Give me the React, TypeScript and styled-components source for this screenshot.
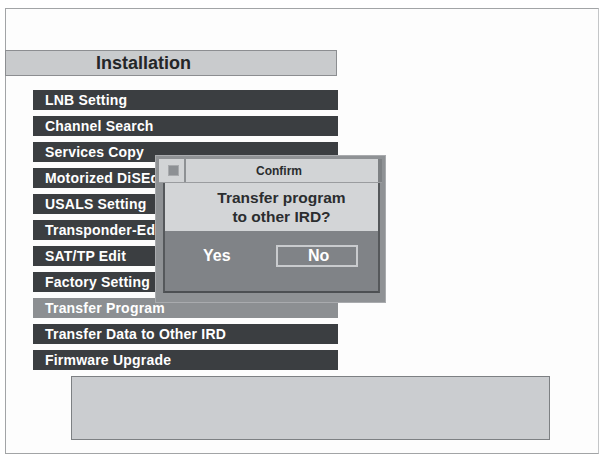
import React from "react";
import styled, { createGlobalStyle } from "styled-components";

const Global = createGlobalStyle`
  html, body { margin: 0; padding: 0; background: #ffffff; }
  body { font-family: "Liberation Sans", Arial, sans-serif; }
`;

const Frame = styled.div`
  position: relative;
  box-sizing: border-box;
  margin: 8px 0 0 5px;
  width: 594px;
  height: 446px;
  border: 1px solid #a2a4a6;
  border-right-color: #c4c6c8;
  background: #fdfdfd;
  padding-top: 41px;
`;

const Header = styled.div`
  box-sizing: border-box;
  width: 332px;
  height: 26px;
  margin-left: -1px;
  background: #c9cbcd;
  border: 1px solid #8c8e91;
  display: flex;
  align-items: center;
  font-weight: bold;
  font-size: 18px;
  color: #242628;
  padding-left: 90px;
`;

const Menu = styled.div`
  display: flex;
  flex-direction: column;
  gap: 6px;
  margin: 14px 0 0 27px;
  width: 305px;
`;

const Item = styled.div<{ $active?: boolean }>`
  height: 20px;
  box-sizing: border-box;
  background: ${(p) => (p.$active ? "#8c8f92" : "#3b3e41")};
  color: #ffffff;
  font-weight: bold;
  font-size: 14px;
  letter-spacing: 0.2px;
  display: flex;
  align-items: center;
  padding-left: 12px;
  white-space: nowrap;
  overflow: hidden;
`;

const InfoBox = styled.div`
  box-sizing: border-box;
  width: 479px;
  height: 64px;
  margin: 6px 0 0 65px;
  background: #cbcdd0;
  border: 1px solid #7d8083;
`;

const Dialog = styled.div`
  position: absolute;
  left: 149px;
  top: 146px;
  width: 231px;
  height: 148px;
  box-sizing: border-box;
  background: #8f9295;
  border: 1px solid #a9abae;
  padding: 3px 3px 0 3px;
  display: flex;
  flex-direction: column;
`;

const TitleBar = styled.div`
  height: 24px;
  box-sizing: border-box;
  display: flex;
  background: #d2d4d6;
  border-bottom: 1px solid #9a9c9f;
`;

const TitleIcon = styled.div`
  width: 21px;
  display: flex;
  align-items: center;
  justify-content: center;
  border-right: 2px solid #8e9194;
  margin-left: 4px;
  &::before {
    content: "";
    width: 9px;
    height: 9px;
    background: #8d9094;
    border: 1px solid #a8aaad;
  }
`;

const TitleText = styled.div`
  flex: 1;
  display: flex;
  align-items: center;
  justify-content: center;
  font-weight: bold;
  font-size: 12px;
  color: #2a2c2e;
  padding-right: 6px;
`;

const TitleEnd = styled.div`
  width: 4px;
  background: #7e8184;
`;

const Body = styled.div`
  margin: 0 2px 0 4px;
  border-left: 2px solid #55585b;
  border-right: 2px solid #55585b;
  border-bottom: 2px solid #4d5053;
  display: flex;
  flex-direction: column;
`;

const Question = styled.div`
  height: 48px;
  background: #d3d5d7;
  display: flex;
  flex-direction: column;
  align-items: center;
  justify-content: center;
  font-weight: bold;
  font-size: 15.5px;
  line-height: 19px;
  color: #2b2d2f;
  padding-left: 20px;
`;

const Buttons = styled.div`
  height: 60px;
  background: #808387;
  display: flex;
  align-items: flex-start;
  padding: 14px 0 0 38px;
  box-sizing: border-box;
  gap: 45px;
`;

const Btn = styled.div<{ $boxed?: boolean }>`
  box-sizing: border-box;
  height: 22px;
  width: ${(p) => (p.$boxed ? "82px" : "auto")};
  border: ${(p) => (p.$boxed ? "2px solid #c9cbce" : "none")};
  display: flex;
  align-items: center;
  justify-content: center;
  color: #ffffff;
  font-weight: bold;
  font-size: 16px;
  padding-left: ${(p) => (p.$boxed ? "4px" : "0")};
`;

const items = [
  "LNB Setting",
  "Channel Search",
  "Services Copy",
  "Motorized DiSEqC",
  "USALS Setting",
  "Transponder-Edit",
  "SAT/TP Edit",
  "Factory Setting",
  "Transfer Program",
  "Transfer Data to Other IRD",
  "Firmware Upgrade",
];

export default function App() {
  return (
    <>
      <Global />
      <Frame>
        <Header>Installation</Header>
        <Menu>
          {items.map((t) => (
            <Item key={t} $active={t === "Transfer Program"}>
              {t}
            </Item>
          ))}
        </Menu>
        <InfoBox />
        <Dialog>
          <TitleBar>
            <TitleIcon />
            <TitleText>Confirm</TitleText>
            <TitleEnd />
          </TitleBar>
          <Body>
            <Question>
              <div>Transfer program</div>
              <div>to other IRD?</div>
            </Question>
            <Buttons>
              <Btn>Yes</Btn>
              <Btn $boxed>No</Btn>
            </Buttons>
          </Body>
        </Dialog>
      </Frame>
    </>
  );
}
